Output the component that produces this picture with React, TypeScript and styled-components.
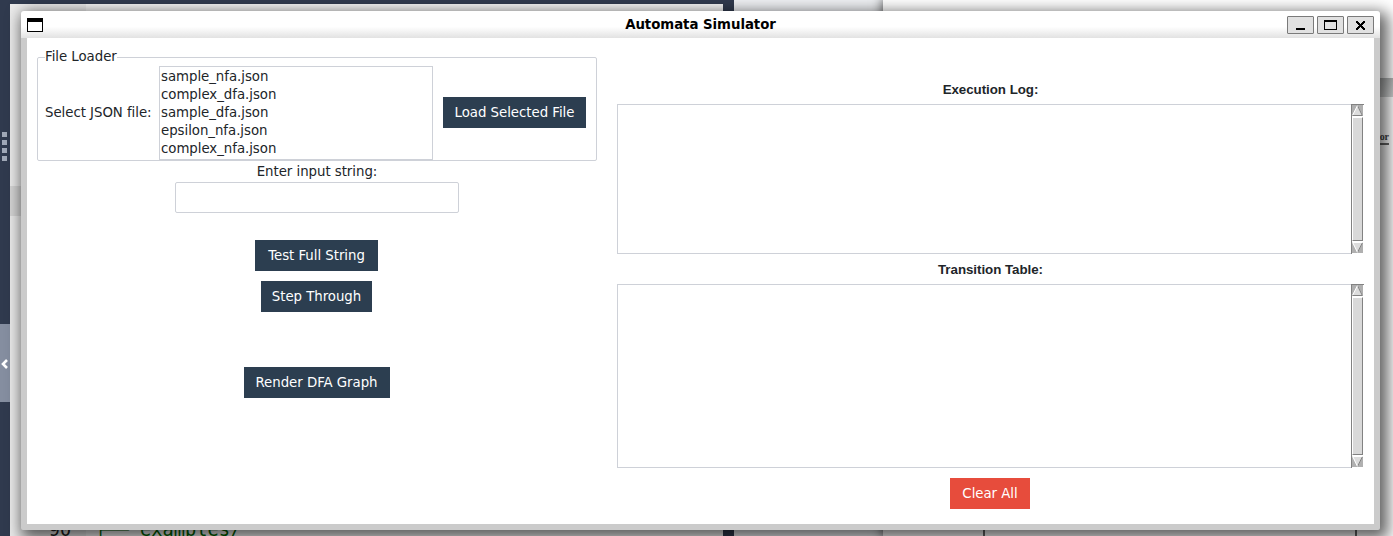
import React from 'react';
import styled, { createGlobalStyle } from 'styled-components';

const GlobalStyle = createGlobalStyle`
  * { box-sizing: border-box; }
  body { margin: 0; overflow: hidden; background: #eff1f4; }
`;

const line = '#ced1d8';

const Desktop = styled.div`
  position: relative;
  width: 1393px;
  height: 536px;
  overflow: hidden;
  background: #eff1f4;
  font-family: 'DejaVu Sans', sans-serif;
  font-size: 13.33px;
  letter-spacing: -0.04px;
  color: #212529;
`;

/* Windows lying behind the active one */
const EditorWindow = styled.div`
  position: absolute;
  left: 0;
  top: 0;
  width: 734px;
  height: 536px;
  padding: 4px 11px 0 10px;
  background: #303a4e;
`;
const EditorPage = styled.div`
  display: flex;
  height: 532px;
  background: #f6f6f6;
`;
const Gutter = styled.div`
  width: 76px;
  padding: 515px 15px 0 0;
  background: #ebebeb;
  text-align: right;
  font: 18.5px/22px 'DejaVu Sans Mono', monospace;
  color: #222;
`;
const CodeLine = styled.div`
  padding: 515px 0 0 9px;
  font: 18.7px/22px 'DejaVu Sans Mono', monospace;
  letter-spacing: 0;
  white-space: pre;
  color: #006400;
`;
const ActiveRow = styled.div`
  position: absolute;
  left: 10px;
  top: 186px;
  width: 76px;
  height: 30px;
  background: #d6d6d6;
`;
const Grip = styled.div`
  position: absolute;
  left: 2px;
  top: 132px;
  display: grid;
  gap: 3px;
`;
const GripDot = styled.i`
  width: 5px;
  height: 5px;
  background: #a0a8b7;
`;
const Collapse = styled.div`
  position: absolute;
  left: 0;
  top: 324px;
  width: 10px;
  height: 78px;
  display: flex;
  align-items: center;
  padding-top: 2px;
  background: #858ea0;
`;
const BrowserWindow = styled.div`
  position: absolute;
  left: 883px;
  top: 0;
  width: 510px;
  height: 536px;
  display: flex;
  flex-direction: column;
  background: #fff;
  box-shadow: 0 0 10px 1px rgba(0, 0, 0, 0.6);
`;
const BrowserHead = styled.div`
  height: 78px;
`;
const BrowserStrip = styled.div`
  height: 19px;
  background: linear-gradient(#b5b7b7, #cfd1d1);
`;
const Document = styled.div`
  flex: 1;
  margin: 0 36px 0 100px;
  border: solid #666;
  border-width: 0 2px;
`;
const DocumentWord = styled.div`
  position: absolute;
  left: 1376px;
  top: 130px;
  width: 13px;
  height: 15px;
  border-bottom: 2px solid #666;
  text-align: right;
  font: bold 10px/13px 'Liberation Serif', serif;
  color: #444;
`;

const Window = styled.div`
  position: absolute;
  left: 21px;
  top: 11px;
  width: 1359px;
  height: 519px;
  display: flex;
  flex-direction: column;
  padding-bottom: 6px;
  border-radius: 3px 3px 2px 2px;
  background: #cbcbcb;
  box-shadow: 4px 5px 15px 4px rgba(0, 0, 0, 0.62);
`;
const TitleBar = styled.div`
  flex: none;
  height: 27px;
  display: grid;
  grid-template-columns: 100px 1fr 100px;
  align-items: center;
  padding: 0 6px;
  border-radius: 3px 3px 0 0;
  background: linear-gradient(#fff 0 58%, #e2e2e2);
`;
const Title = styled.div`
  text-align: center;
  font-size: 13.33px;
  font-weight: bold;
  line-height: 26px;
  color: #000;
`;
const Controls = styled.div`
  display: flex;
  justify-content: flex-end;
  gap: 3px;
  padding-top: 1px;
`;
const ControlButton = styled.button`
  width: 27px;
  height: 18px;
  padding: 0;
  border: 1px solid #7a7a7a;
  border-radius: 1px;
  background: #e1e1e1;
  svg { display: block; }
`;
const Client = styled.div`
  flex: 1;
  display: grid;
  grid-template-columns: 560px 747px;
  column-gap: 20px;
  margin: 0 6px;
  padding: 0 10px;
  background: #fff;
`;
const Left = styled.div`
  display: flex;
  flex-direction: column;
  align-items: center;
  padding-top: 10px;
`;
const FileLoader = styled.fieldset`
  width: 560px;
  height: 113px;
  margin: 0;
  padding: 0 10px 0 7px;
  border: 1px solid ${line};
  border-radius: 2px;
`;
const Legend = styled.legend`
  height: 18px;
  padding: 0;
  line-height: 17px;
`;
const LoaderRow = styled.div`
  display: flex;
  align-items: center;
  height: 94px;
`;
const FileLabel = styled.span`
  width: 114px;
  line-height: 18px;
  padding-bottom: 1px;
`;
const FileList = styled.div`
  width: 274px;
  height: 94px;
  margin-right: 10px;
  padding: 1px;
  border: 1px solid ${line};
`;
const FileItem = styled.div`
  height: 18px;
  line-height: 17px;
`;
const Button = styled.button<{ $w: number; $top?: number; $danger?: boolean }>`
  flex: none;
  width: ${(p) => p.$w}px;
  height: 31px;
  margin: ${(p) => p.$top ?? 0}px 0 0;
  padding: 1px 0 0;
  border: 0;
  background: ${(p) => (p.$danger ? '#e74c3c' : '#2c3e50')};
  color: #fff;
  font: 13.33px/18px 'DejaVu Sans', sans-serif;
  letter-spacing: -0.04px;
  white-space: nowrap;
`;
const LoadButton = styled(Button)`
  margin-top: -1px;
`;
const Actions = styled.div`
  display: flex;
  flex-direction: column;
  align-items: center;
  width: 100%;
  padding-right: 1px;
`;
const InputLabel = styled.label`
  height: 21px;
  line-height: 22px;
`;
const Entry = styled.input`
  width: 284px;
  height: 31px;
  border: 1px solid ${line};
  border-radius: 2px;
  outline: 0;
`;
const Right = styled.div`
  display: flex;
  flex-direction: column;
  align-items: center;
  padding-top: 36px;
`;
const Heading = styled.div`
  height: 30px;
  font: bold 13.33px/32px 'Liberation Sans', Arial, sans-serif;
`;
const Pane = styled.div<{ $h: number }>`
  display: flex;
  width: 747px;
  height: ${(p) => p.$h}px;
`;
const TextArea = styled.div`
  width: 735px;
  border: 1px solid ${line};
`;
const ScrollTrack = styled.div`
  display: flex;
  flex-direction: column;
  width: 13px;
  margin-left: -1px;
  padding-bottom: 1px;
  border-top: 1px solid #828282;
  border-left: 1px solid #828282;
  background: #fff;
  svg { flex: none; }
`;
const Thumb = styled.div`
  flex: 1;
  width: 11px;
  margin: 1px 0;
  border: 1px solid;
  border-color: #fff #828282 #828282 #fff;
  background: #d9d9d9;
`;

const Arrow = ({ down }: { down?: boolean }) => (
  <svg width="11" height="11" viewBox="0 0 11 11">
    <path d="M0 0h11v11H0z" fill="#b0b0b0" />
    {down ? (
      <>
        <path d="M0 0h11L5.5 11z" fill="#dcdcdc" />
        <path d="M10.3 1L5.7 10" stroke="#828282" />
        <path d="M10.5 .5H.7L5.3 10" stroke="#fff" fill="none" />
      </>
    ) : (
      <>
        <path d="M5.5 0L11 11H0z" fill="#dcdcdc" />
        <path d="M5.7 1L10.3 10.5H.5" stroke="#828282" fill="none" />
        <path d="M.7 10L5.3 1" stroke="#fff" />
      </>
    )}
  </svg>
);

const ScrollPane = ({ h }: { h: number }) => (
  <Pane $h={h}>
    <TextArea />
    <ScrollTrack>
      <Arrow />
      <Thumb />
      <Arrow down />
    </ScrollTrack>
  </Pane>
);

const files = ['sample_nfa.json', 'complex_dfa.json', 'sample_dfa.json', 'epsilon_nfa.json', 'complex_nfa.json'];

export default function App() {
  return (
    <Desktop>
      <GlobalStyle />
      <EditorWindow>
        <EditorPage>
          <Gutter>90</Gutter>
          <CodeLine>├── examples/</CodeLine>
        </EditorPage>
        <ActiveRow />
        <Grip>
          <GripDot />
          <GripDot />
          <GripDot />
          <GripDot />
        </Grip>
        <Collapse>
          <svg width="10" height="12" viewBox="0 0 10 12">
            <path d="M7 2L3 6l4 4" stroke="#fff" strokeWidth="2.6" fill="none" />
          </svg>
        </Collapse>
      </EditorWindow>
      <BrowserWindow>
        <BrowserHead />
        <BrowserStrip />
        <Document />
      </BrowserWindow>
      <DocumentWord>or</DocumentWord>

      <Window>
        <TitleBar>
          <svg width="16" height="14" viewBox="0 0 16 14" shapeRendering="crispEdges">
            <path d="M0 0h16v14H0z" />
            <path d="M1 4h14v9H1z" fill="#fff" />
          </svg>
          <Title>Automata Simulator</Title>
          <Controls>
            <ControlButton aria-label="Minimize">
              <svg width="25" height="16" shapeRendering="crispEdges">
                <path d="M8 11h9v2H8z" />
              </svg>
            </ControlButton>
            <ControlButton aria-label="Maximize">
              <svg width="25" height="16" shapeRendering="crispEdges">
                <path d="M6 3h13v10H6zM7 5v7h11V5z" fillRule="evenodd" />
              </svg>
            </ControlButton>
            <ControlButton aria-label="Close">
              <svg width="25" height="16" shapeRendering="crispEdges">
                <path d="M8 4h2v1h1v1h1v1h1v-1h1v-1h1v-1h2v2h-1v1h-1v1h-1v1h1v1h1v1h1v2h-2v-1h-1v-1h-1v-1h-1v1h-1v1h-1v1h-2v-2h1v-1h1v-1h1v-1h-1v-1h-1v-1h-1z" />
              </svg>
            </ControlButton>
          </Controls>
        </TitleBar>
        <Client>
          <Left>
            <FileLoader>
              <Legend>File Loader</Legend>
              <LoaderRow>
                <FileLabel>Select JSON file:</FileLabel>
                <FileList>
                  {files.map((f) => (
                    <FileItem key={f}>{f}</FileItem>
                  ))}
                </FileList>
                <LoadButton $w={143}>Load Selected File</LoadButton>
              </LoaderRow>
            </FileLoader>
            <InputLabel htmlFor="word">Enter input string:</InputLabel>
            <Entry id="word" />
            <Actions>
              <Button $w={123} $top={27}>Test Full String</Button>
              <Button $w={111} $top={10}>Step Through</Button>
              <Button $w={146} $top={55}>Render DFA Graph</Button>
            </Actions>
          </Left>
          <Right>
            <Heading>Execution Log:</Heading>
            <ScrollPane h={150} />
            <Heading>Transition Table:</Heading>
            <ScrollPane h={184} />
            <Actions>
              <Button $w={80} $top={10} $danger>Clear All</Button>
            </Actions>
          </Right>
        </Client>
      </Window>
    </Desktop>
  );
}
